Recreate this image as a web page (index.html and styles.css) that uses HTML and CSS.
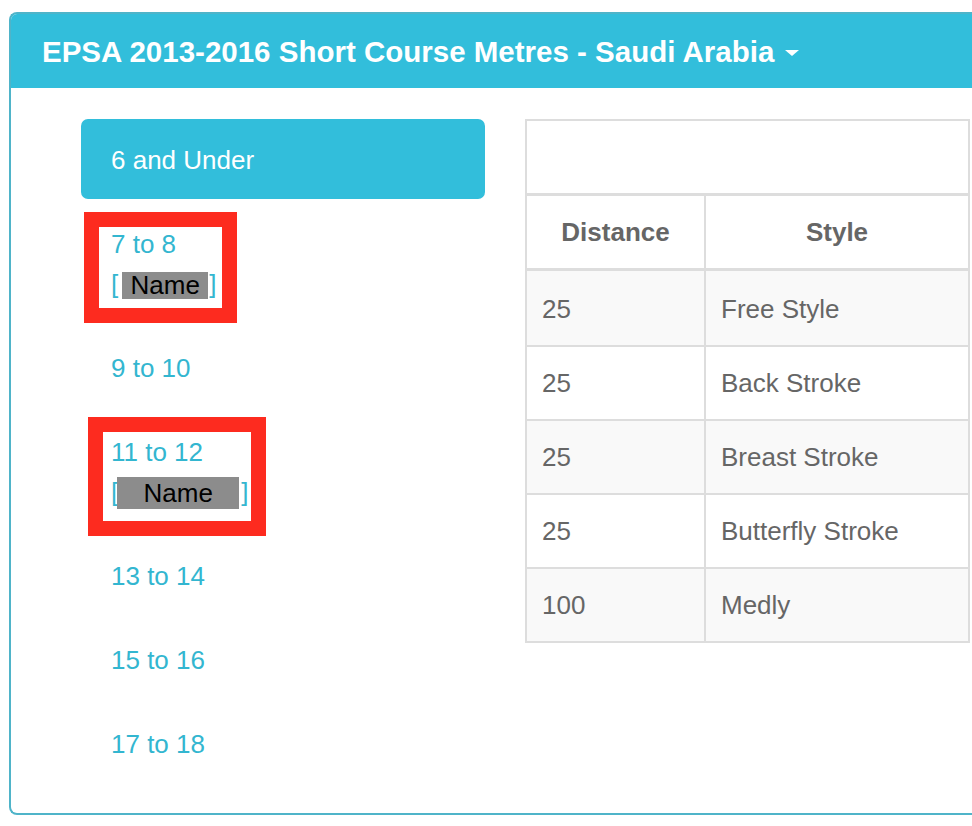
FILE: index.html
```
<!DOCTYPE html>
<html lang="en">
<head>
    <meta charset="UTF-8">
    <meta name="viewport" content="width=device-width, initial-scale=1.0">
    <title>EPSA Age Groups</title>
    <link rel="stylesheet" href="styles.css">
</head>
<body>
    <div class="panel">
        <div class="panel-heading">
            <span class="panel-title">EPSA 2013-2016 Short Course Metres - Saudi Arabia</span>
            <span class="caret"></span>
        </div>
        <div class="panel-body">
            <ul class="age-nav">
                <li class="active"><a href="#">6 and Under</a></li>
                <li>
                    <a href="#">7 to 8<br>[<span class="redact redact-sm">Name</span>]</a>
                    <span class="mark mark-first"></span>
                </li>
                <li><a href="#">9 to 10</a></li>
                <li>
                    <a href="#">11 to 12<br>[<span class="redact redact-lg">Name</span>]</a>
                    <span class="mark mark-second"></span>
                </li>
                <li><a href="#">13 to 14</a></li>
                <li><a href="#">15 to 16</a></li>
                <li><a href="#">17 to 18</a></li>
            </ul>
            <table class="events">
                <colgroup>
                    <col class="col-distance">
                    <col>
                </colgroup>
                <thead>
                    <tr><th colspan="2" class="title-cell"></th></tr>
                    <tr><th>Distance</th><th>Style</th></tr>
                </thead>
                <tbody>
                    <tr><td>25</td><td>Free Style</td></tr>
                    <tr><td>25</td><td>Back Stroke</td></tr>
                    <tr><td>25</td><td>Breast Stroke</td></tr>
                    <tr><td>25</td><td>Butterfly Stroke</td></tr>
                    <tr><td>100</td><td>Medly</td></tr>
                </tbody>
            </table>
        </div>
    </div>
</body>
</html>
```

FILE: styles.css
```
* { margin: 0; padding: 0; box-sizing: border-box; }
html, body { overflow: hidden; background: #fff; }
body { font-family: "Liberation Sans", Arial, sans-serif; font-size: 26px; color: #666; }

/* panel is cut off by the right edge of the window */
.panel { margin: 12px 0 0 9px; width: 963px; border: 2px solid #4fb4c9; border-right: 0; border-radius: 8px 0 0 8px; overflow: hidden; }
.panel-heading { display: flex; align-items: center; height: 74px; padding: 2px 31px 0; background: #32bedb; color: #fff; }
.panel-title { font-size: 29.5px; font-weight: bold; }
.caret { margin-left: 11px; margin-top: 2px; width: 0; height: 0; border-left: 7px solid transparent; border-right: 7px solid transparent; border-top: 6px solid #fff; }

.panel-body { display: grid; grid-template-columns: 404px 445px; column-gap: 40px; align-items: start; padding: 31px 0 30px 70px; }

.age-nav { list-style: none; display: flex; flex-direction: column; gap: 4px; }
.age-nav li { position: relative; }
.age-nav a { display: block; padding: 21px 30px 19px; line-height: 40px; color: #33b6d0; text-decoration: none; border-radius: 7px; }
.age-nav li.active a { background: #32bedb; color: #fff; }

.redact { position: relative; top: 1px; display: inline-block; background: #8c8c8c; color: #000; text-align: center; vertical-align: middle; }
.redact-sm { width: 86px; height: 27px; line-height: 27px; margin: -4px 1px 0 4px; }
.redact-lg { width: 122px; height: 32px; line-height: 32px; margin: -4px 2px 0 -1px; }

.mark { position: absolute; border: 15px solid #fd2b1f; pointer-events: none; }
.mark-first { left: 3px; top: 9px; width: 153px; height: 111px; }
.mark-second { left: 7px; top: 6px; width: 178px; height: 119px; }

.events { width: 445px; table-layout: fixed; border-collapse: collapse; border: 2px solid #ddd; }
.col-distance { width: 179px; }
.events th, .events td { border: 2px solid #ddd; padding: 16px 15px; line-height: 40px; text-align: left; }
.events thead th { border-bottom-width: 3px; text-align: center; font-weight: bold; color: #666; }
.events .title-cell { height: 74px; }
.events tbody tr:first-child td { padding-top: 18px; }
.events tbody tr:nth-child(odd) { background: #f9f9f9; }
```
